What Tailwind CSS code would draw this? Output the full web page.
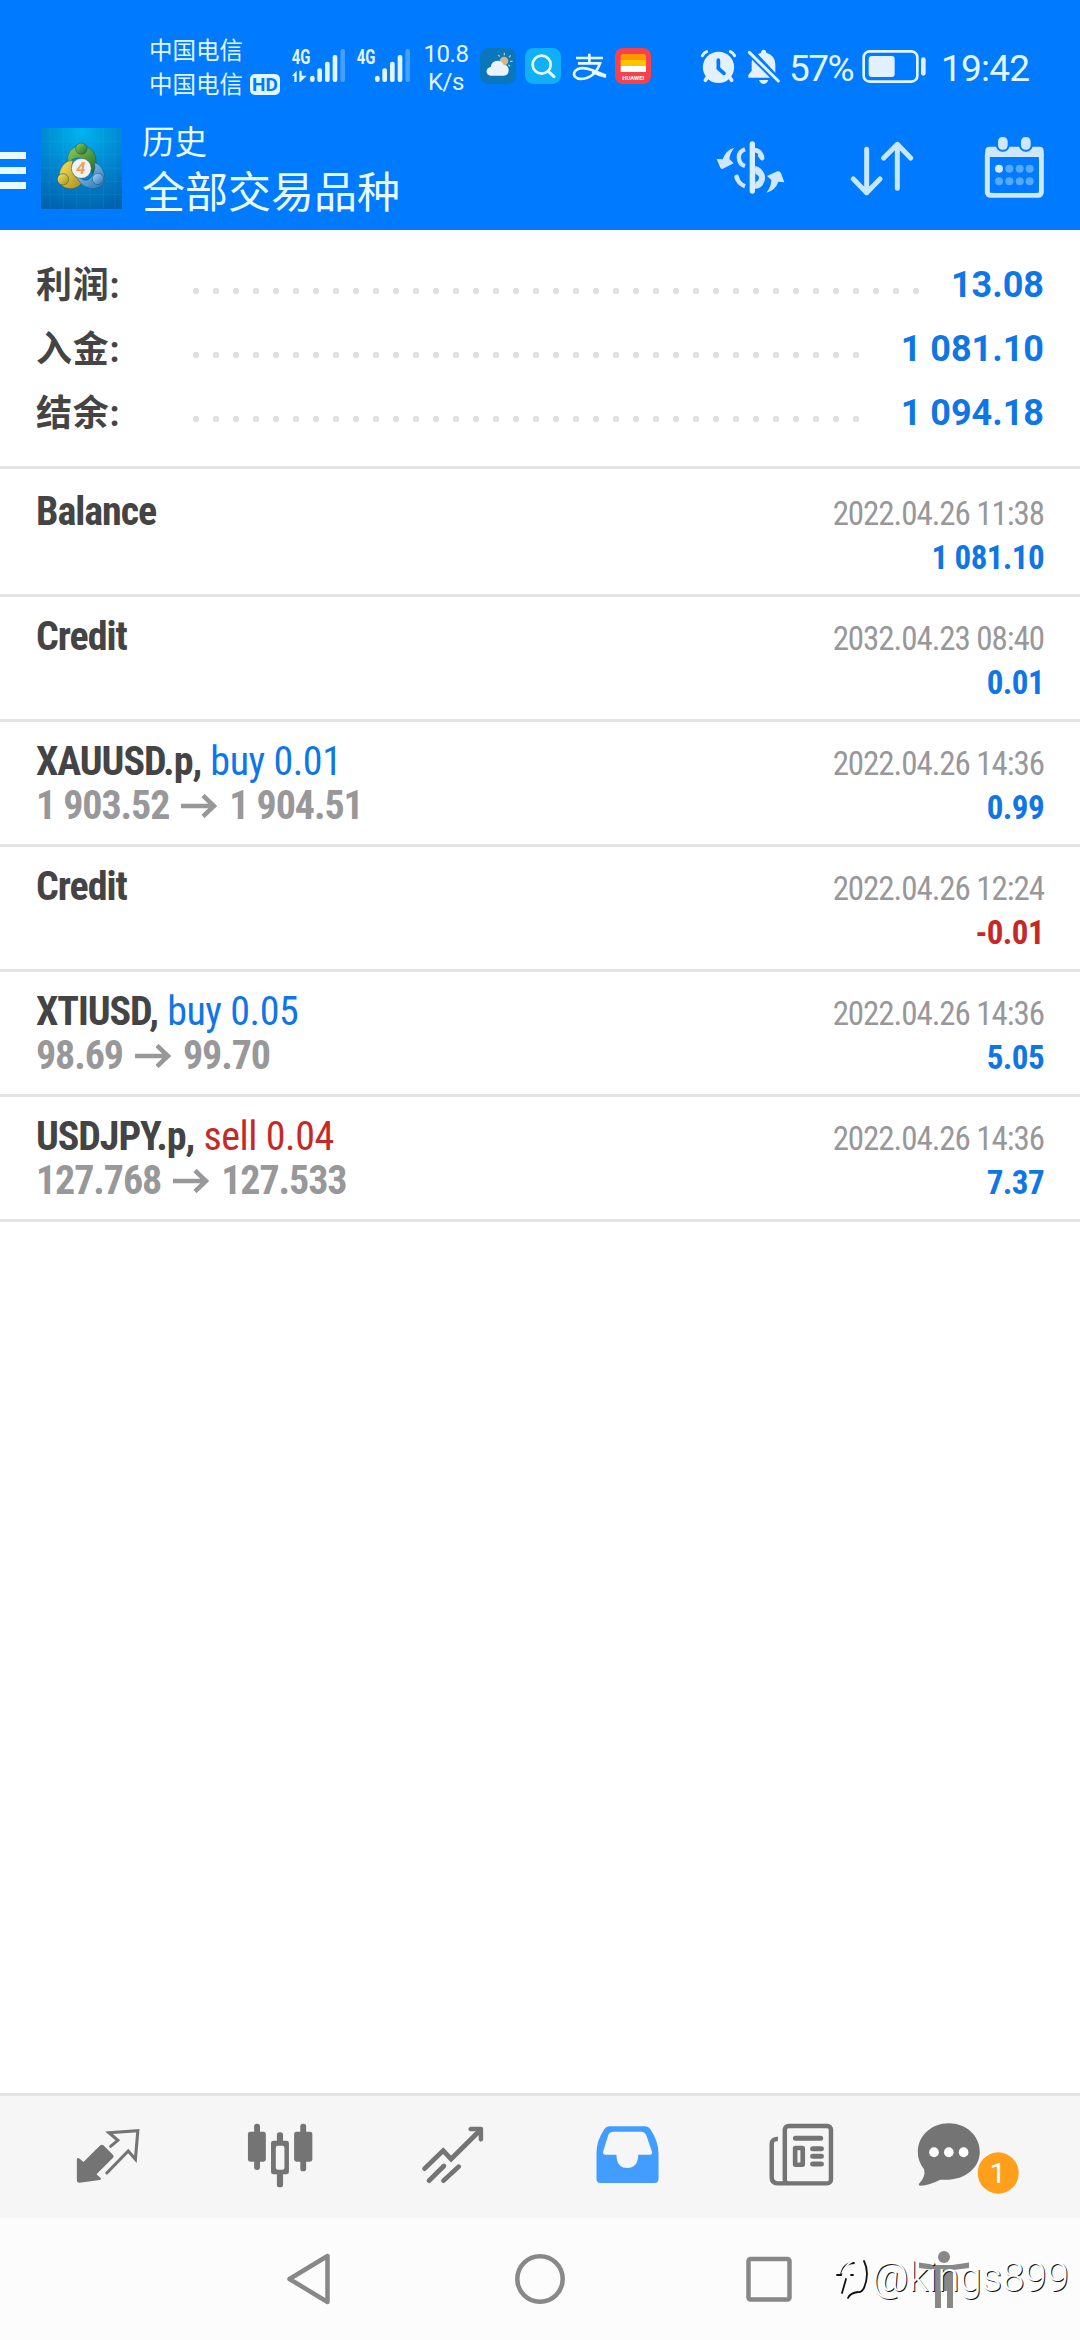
<!DOCTYPE html>
<html lang="zh-CN">
<head>
<meta charset="utf-8">
<meta name="viewport" content="width=device-width">
<title>历史</title>
<script src="https://cdn.jsdelivr.net/npm/@tailwindcss/browser@4"></script>
</head>
<body class="w-[1080px] h-[2340px] overflow-hidden bg-white font-['Roboto','Noto_Sans_CJK_SC',sans-serif] flex flex-col">

<header class="bg-[#007aff] h-[230px] shrink-0 text-[#e2f5ff]">
  <!-- status bar -->
  <div class="h-[100px] pt-8 flex items-center whitespace-nowrap">
    <div class="ml-[149px] w-[141px] text-[23.5px] leading-[34px] pt-[3px]">
      <div>中国电信</div>
      <div class="flex items-center gap-[7px]">中国电信<span class="w-[30px] h-[21px] rounded-[5px] bg-[#e2f5ff] text-[#007aff] text-[19px] leading-[21px] font-bold text-center">HD</span></div>
    </div>
    <svg class="w-[122px] h-12" viewBox="480 66 366 144">
      <g fill="#e2f5ff">
        <text x="485" y="131" font-size="60" font-weight="700" textLength="56" lengthAdjust="spacingAndGlyphs">4G</text>
        <text x="680" y="131" font-size="60" font-weight="700" textLength="56" lengthAdjust="spacingAndGlyphs">4G</text>
        <path d="M486 168L500 152V186H493V168ZM508 152H515V167H530L511 186H508Z"/>
        <g id="bars">
          <rect x="540" y="167" width="14" height="19" rx="7"/><rect x="562" y="145" width="14" height="41" rx="6"/><rect x="585" y="125" width="14" height="61" rx="6"/><rect x="608" y="105" width="14" height="81" rx="6"/><rect x="631" y="87" width="14" height="99" rx="6" opacity=".3"/>
        </g>
        <use href="#bars" x="195"/>
      </g>
    </svg>
    <div class="ml-3 w-[44px] text-[24px] leading-[28px] tracking-[-0.500px] text-center flex flex-col items-center pt-[3px]"><span>10.8</span><span>K/s</span></div>
    <svg class="ml-[11px] w-[38px] h-12" viewBox="207 66 114 144">
      <rect x="210" y="84" width="108" height="108" rx="25" fill="#0a77bd"/>
      <path d="M283 106v-8M297 112l5-6M300 124h8M269 110l-4-5M295 134l5 5" stroke="#c9c3a0" stroke-width="4"/>
      <circle cx="282" cy="123" r="13" fill="#d3b68a"/>
      <path d="M243 167a13 13 0 0 1-1-26q4-20 22-19 13 1 17 13 14-1 15 15t-15 17Z" fill="#e9f4fc"/>
    </svg>
    <svg class="ml-[7px] w-[38px] h-12" viewBox="342 66 114 144">
      <rect x="345" y="84" width="108" height="108" rx="25" fill="#0fb0f8"/>
      <circle cx="395" cy="134" r="27" fill="none" stroke="#e8faff" stroke-width="8"/>
      <path d="M415 154l17 16" stroke="#e8faff" stroke-width="9" stroke-linecap="round"/>
    </svg>
    <svg class="ml-[10px] w-9 h-12" viewBox="486 66 108 144" fill="none" stroke="#e8f8ff" stroke-width="8">
      <path d="M498 114H579M538 101V129M504 130H570Q558 164 532 173Q506 182 495 170Q486 156 504 147Q520 141 545 150T588 168"/>
      <path d="M548 150Q570 160 588 162V174Q566 170 545 158Z" fill="#e8f8ff" stroke="none"/>
    </svg>
    <svg class="ml-[6px] w-[38px] h-12" viewBox="612 66 114 144">
      <rect x="615" y="84" width="108" height="108" rx="24" fill="#f8414b"/>
      <path d="M632 110q0-8 8-8H700q8 0 8 8V122H632Z" fill="#ff9800"/><path d="M632 120H708V138H632Z" fill="#ffc400"/><path d="M632 138H708V156H632Z" fill="#fff"/>
      <text x="637" y="180" font-size="17" font-weight="700" fill="#fff" textLength="66" lengthAdjust="spacingAndGlyphs">HUAWEI</text>
    </svg>
    <svg class="ml-12 w-[37px] h-12" viewBox="60 66 111 144" fill="none" stroke="#e2f0ff" stroke-linecap="round">
      <circle cx="115.500" cy="142" r="47" fill="#e2f0ff" stroke="none"/>
      <path d="M67 107Q72 98 80 95M164 107Q159 98 151 95" stroke-width="9"/>
      <path d="M82 172L76 181M149 172L155 181" stroke-width="11"/>
      <path d="M115 120V145L132 160" stroke="#007aff" stroke-width="11"/>
    </svg>
    <svg class="ml-[10px] w-[33px] h-12" viewBox="201 66 99 144">
      <g fill="#e2f0ff"><path d="M234 103q6-4 9-5 1-9 8-9t8 9q28 9 27 37v23Z"/><path d="M216 119L270 173H205V165L215 152V128Z"/><path d="M237 180H265Q260 192 251 192T237 180Z"/></g>
      <path d="M208 97L295 183" stroke="#e2f0ff" stroke-width="9" stroke-linecap="round"/>
    </svg>
    <div class="ml-[9px] w-[73px] text-[37px] leading-none tracking-[-1.500px] pt-1">57%</div>
    <svg class="w-[65px] h-12" viewBox="547 66 195 144" fill="#e2f0ff">
      <rect x="552" y="94" width="161" height="91" rx="18" fill="none" stroke="#e2f5ff" stroke-width="8"/>
      <rect x="567" y="108" width="78" height="63" rx="9"/><rect x="724" y="112" width="14" height="55" rx="7"/>
    </svg>
    <div class="ml-[14px] text-[37px] leading-none tracking-[-0.800px] pt-1">19:42</div>
  </div>

  <!-- app bar -->
  <div class="h-[130px] flex items-center">
    <div class="w-[26px] h-[37px] mt-[11px] flex flex-col justify-between"><i class="h-[7px] bg-[#e8faff]"></i><i class="h-[7px] bg-[#e8faff]"></i><i class="h-[7px] bg-[#e8faff]"></i></div>
    <svg class="ml-[15px] mt-[7px] w-[81px] h-[81px]" viewBox="123 55 243 243">
      <defs>
        <radialGradient id="sky" cx=".5" cy=".05" r="1"><stop offset="0" stop-color="#00b4f0"/><stop offset=".5" stop-color="#0088d0"/><stop offset="1" stop-color="#0062ae"/></radialGradient>
        <linearGradient id="gr" x2="1" y2="1"><stop offset="0" stop-color="#8fd25a"/><stop offset="1" stop-color="#21682b"/></linearGradient>
        <linearGradient id="ye" x2="1" y2="1"><stop offset="0" stop-color="#f5ea62"/><stop offset="1" stop-color="#b08a14"/></linearGradient>
        <linearGradient id="bl" x2="1" y2="1"><stop offset="0" stop-color="#a8d8f6"/><stop offset="1" stop-color="#2272b8"/></linearGradient>
      </defs>
      <rect x="123" y="55" width="243" height="243" fill="url(#sky)"/>
      <path d="M123 95H366M123 135H366M123 175H366M123 215H366M123 255H366M150 55V298M190 55V298M230 55V298M270 55V298M310 55V298M345 55V298" stroke="#3fb8ee" stroke-opacity=".22" stroke-width="2"/>
      <g stroke="#17506b" stroke-opacity=".6" stroke-width="2.500">
        <path d="M203 160Q198 112 243 108Q290 112 289 160L277 192Q262 146 244 146Q226 140 203 160Z" fill="url(#gr)"/>
        <path d="M283 158Q312 168 315 208Q312 235 280 237Q240 235 219 190L240 205Q262 222 279 195Q288 175 283 158Z" fill="url(#bl)"/>
        <path d="M219 151Q180 155 176 205Q178 235 210 237Q232 237 244 222L222 196Q213 180 219 151Z" fill="url(#ye)"/>
        <circle cx="244" cy="117" r="17" fill="url(#gr)"/><circle cx="189" cy="209" r="17" fill="url(#ye)"/><circle cx="294" cy="208" r="17" fill="url(#bl)"/>
        <circle cx="244" cy="176" r="30" fill="#f1f1ee"/>
      </g>
      <text x="243" y="194" font-size="50" font-weight="700" font-style="italic" text-anchor="middle" fill="#eda05b">4</text>
    </svg>
    <div class="ml-[20px] mt-[12px] text-[#e8faff]">
      <div class="text-[32.500px] leading-[44px]">历史</div>
      <div class="text-[43px] leading-[57px]">全部交易品种</div>
    </div>
    <svg class="ml-auto w-[80px] h-[80px] mt-[6px]" viewBox="60 54 240 240" fill="none" stroke="#cfe6ff">
      <path d="M187 102V243" stroke-width="16" stroke-linecap="round" stroke="#d4efff"/>
      <path d="M165 118Q144 126 147 146Q149 163 165 168M192 120Q211 121 217 142M140 200Q144 221 165 229M195 178Q218 184 219 204Q217 226 195 229" stroke-width="13"/>
      <path d="M211 137L216 144M140 201L141 205" stroke-width="14" stroke-linecap="round"/>
      <path d="M196 168Q222 174 224 204Q222 234 196 236Z" fill="#cfe6ff" stroke="none"/><path d="M196 192Q208 196 207 204Q205 214 196 216Z" fill="#007aff" stroke="none"/>
      <path d="M133 113Q120 128 118 147L131 160L102 175Q94 180 91 173L80 147L98 148Q107 120 133 113ZM229 248Q243 232 244 210L231 198L262 184Q270 182 273 190L283 217L265 215Q257 240 229 248Z" fill="#cfe6ff" stroke="none"/>
    </svg>
    <svg class="ml-[60px] w-[64px] h-[80px] mt-[6px]" viewBox="480 54 192 240" fill="none" stroke="#c6e8ff" stroke-width="15" stroke-linecap="round" stroke-linejoin="round">
      <path d="M530 118V248M490 207L530 248L570 207M622 235V103M581 144L622 103L662 144"/>
    </svg>
    <svg class="ml-[70px] mr-[35px] w-[61px] h-[80px] mt-[6px]" viewBox="882 54 183 240">
      <rect x="892" y="126" width="162" height="130" rx="9" fill="none" stroke="#cfe6ff" stroke-width="15"/>
      <path d="M886 122q0-12 12-12H1048q13 0 13 12V141H886Z" fill="#cfe6ff"/>
      <rect x="900" y="141" width="147" height="108" rx="13" fill="#007aff"/>
      <g fill="#cfe6ff" stroke="#007aff" stroke-width="6"><rect x="921" y="78" width="35" height="44" rx="16"/><rect x="990" y="78" width="35" height="44" rx="16"/></g>
      <g fill="#55a9ff"><circle cx="927" cy="176" r="12" fill="#cfeaff"/><circle cx="958" cy="176" r="12"/><circle cx="989" cy="176" r="12"/><circle cx="1019" cy="176" r="12"/><circle cx="927" cy="214" r="12"/><circle cx="958" cy="214" r="12"/><circle cx="989" cy="214" r="12"/><circle cx="1019" cy="214" r="12"/></g>
    </svg>
  </div>
</header>

<!-- account summary -->
<section class="h-[239px] shrink-0 border-b-3 border-[#e4e4e4] pt-[23px] pl-9 pr-9 text-[36px] font-bold text-[#444]">
  <div class="h-16 flex items-center"><span class="w-[150px] pt-0.5 tracking-[0.800px]">利润:</span><span class="w-[740px] h-5 mt-[11px] bg-[radial-gradient(circle,#e0e0e0_3px,transparent_3.6px)] bg-[length:20px_20px]"></span><span class="ml-auto text-[#1076e6]">13.08</span></div>
  <div class="h-16 flex items-center"><span class="w-[150px] pt-0.5 tracking-[0.800px]">入金:</span><span class="w-[680px] h-5 mt-[11px] bg-[radial-gradient(circle,#e0e0e0_3px,transparent_3.6px)] bg-[length:20px_20px]"></span><span class="ml-auto text-[#1076e6]">1 081.10</span></div>
  <div class="h-16 flex items-center"><span class="w-[150px] pt-0.5 tracking-[0.800px]">结余:</span><span class="w-[680px] h-5 mt-[11px] bg-[radial-gradient(circle,#e0e0e0_3px,transparent_3.6px)] bg-[length:20px_20px]"></span><span class="ml-auto text-[#1076e6]">1 094.18</span></div>
</section>

<!-- deals -->
<main id="deals" class="grow pt-[3px] font-stretch-condensed"></main>

<!-- tabs -->
<nav class="h-[125px] shrink-0 border-t-3 border-[#e4e4e4] bg-[#f6f6f6] flex items-center px-5 text-[#747474]">
  <div class="w-1/6 flex justify-center"><svg class="w-18 h-18 overflow-visible" viewBox="205 121 209 216" preserveAspectRatio="none">
    <path d="M290 194q5-4 9 0L327 223q4 4 0 8L279 281L291 292Q294 297 288 298L230 306Q222 307 222 299V235Q224 229 230 234L241 244Z" fill="currentColor"/>
    <path d="M320 197L341 179L315 156L399 150L392 236L371 211L309 277" fill="none" stroke="currentColor" stroke-width="9" stroke-linecap="round"/>
  </svg></div>
  <div class="w-1/6 flex justify-center"><svg class="w-18 h-18" viewBox="708.6 121 209 216" preserveAspectRatio="none" fill="currentColor">
    <rect x="738" y="129" width="17" height="139" rx="8"/><rect x="872" y="129" width="17" height="143" rx="8"/><rect x="804" y="155" width="18" height="165" rx="8"/>
    <rect x="720" y="153" width="52" height="90" rx="7"/><rect x="854" y="153" width="53" height="90" rx="7"/><rect x="787" y="180" width="52" height="101" rx="7"/><rect x="801" y="195" width="25" height="72" rx="6" fill="#f6f6f6"/>
  </svg></div>
  <div class="w-1/6 flex justify-center"><svg class="w-18 h-18" viewBox="1212 121 209 216" preserveAspectRatio="none" fill="none" stroke="currentColor" stroke-width="14" stroke-linecap="round">
    <path d="M1234 264L1288 210L1311 235L1396 148M1247 300L1290 256M1289 300L1333 258"/><path d="M1366 138H1398Q1404 138 1404 144V178Q1397 188 1391 178V162L1384 152H1366Q1356 145 1366 138Z" fill="currentColor" stroke="none"/>
  </svg></div>
  <div class="w-1/6 flex justify-center"><svg class="w-18 h-18" viewBox="147 121 209 216" preserveAspectRatio="none">
    <path fill-rule="evenodd" fill="#429dff" d="M200 137H304Q314 137 319 145Q343 182 343 218V294Q343 307 331 307H175Q163 307 163 295V216Q163 180 186 145Q191 137 200 137ZM211 153Q202 153 198 161L182 213Q181 222 189 222H221Q221 261 252 262Q284 260 284 222H317Q326 222 324 213L308 165Q304 153 292 153Z"/>
  </svg></div>
  <div class="w-1/6 flex justify-center"><svg class="w-18 h-18" viewBox="650.6 121 209 216" preserveAspectRatio="none" fill="none" stroke="currentColor" stroke-width="13">
    <rect x="711" y="136" width="134" height="172" rx="11"/><path d="M691 175Q673 174 673 190V290Q673 308 690 308H720"/>
    <path d="M742 173H815M792 204H817M792 227H817M792 250H817" stroke-width="15" stroke-linecap="round"/><rect x="741" y="202" width="22" height="50" rx="1" stroke-width="13.500"/>
  </svg></div>
  <div class="w-1/6 flex justify-center"><svg class="w-[120px] h-18 overflow-visible" viewBox="1084 121 348.500 216" preserveAspectRatio="none">
    <path d="M1188 128C1238 128 1278 165 1278 213C1278 261 1234 303 1163 297Q1132 314 1106 315Q1097 315 1103 307Q1122 287 1116 266Q1098 242 1098 214C1098 165 1138 128 1188 128Z" fill="currentColor"/>
    <g fill="#fff"><ellipse cx="1145" cy="215" rx="14" ry="15"/><ellipse cx="1188" cy="215" rx="14" ry="15"/><ellipse cx="1231" cy="215" rx="14" ry="15"/></g>
    <ellipse cx="1331.500" cy="277" rx="59.500" ry="62" fill="#ff9f1c"/>
    <text x="1330" y="307" font-size="85" text-anchor="middle" fill="#fff">1</text>
  </svg></div>
</nav>

<!-- system navigation -->
<footer class="relative h-[122px] shrink-0 bg-[#fcfcfc] flex items-center text-[#888]">
  <svg class="ml-[279px] w-[60px] h-[60px]" viewBox="279 2249 60 60" fill="none" stroke="currentColor" stroke-width="4.500" stroke-linejoin="round"><path d="M289.500 2279L327.500 2256V2302Z"/></svg>
  <svg class="ml-[171px] w-[60px] h-[60px]" viewBox="510 2249 60 60" fill="none" stroke="currentColor" stroke-width="4.500"><circle cx="540" cy="2279" r="22.700"/></svg>
  <svg class="ml-[169px] w-[60px] h-[60px]" viewBox="739 2249 60 60" fill="none" stroke="currentColor" stroke-width="4.500"><rect x="748.500" y="2259" width="41" height="40.500" rx="2"/></svg>
  <svg class="ml-[115px] w-[60px] h-[60px]" viewBox="914 2249 60 60" fill="currentColor"><circle cx="944" cy="2257" r="6"/><path d="M919 2262.500L936 2265H952L969 2262.500V2268L953 2270V2308H947V2291H941V2308H935V2270L919 2268Z"/></svg>
  <div class="absolute left-[832px] top-[37px] flex items-center">
    <svg class="w-10 h-[46px]" viewBox="0 0 40 46" fill="none" stroke-linecap="round">
      <g stroke="#111" stroke-width="1.800"><path d="M10 38L14 24M5 20H9Q11 8 22 8M32 6Q38 18 32 33Q29 38 26 37Q18 38 16 43M19 20H21"/></g>
      <path d="M8 37L12 23M14 17H24M10 18Q13 10 21 6" stroke="#fff" stroke-width="1.500"/>
    </svg>
    <span class="text-[40px] leading-[46px] font-light text-white tracking-[0.100px] [text-shadow:1px_1px_0_#111]">@kings899</span>
  </div>
</footer>

<script>
  const rows = [
    ['Balance', '', '', '', '2022.04.26 11:38', '1 081.10'],
    ['Credit', '', '', '', '2032.04.23 08:40', '0.01'],
    ['XAUUSD.p,', 'buy 0.01', '1 903.52', '1 904.51', '2022.04.26 14:36', '0.99'],
    ['Credit', '', '', '', '2022.04.26 12:24', '-0.01'],
    ['XTIUSD,', 'buy 0.05', '98.69', '99.70', '2022.04.26 14:36', '5.05'],
    ['USDJPY.p,', 'sell 0.04', '127.768', '127.533', '2022.04.26 14:36', '7.37'],
  ];
  const arrow = '<svg class="inline-block w-9 h-6 mx-3" viewBox="0 0 36 24" fill="none" stroke="#98989a" stroke-width="4.500"><path d="M0 12H33M22 1.500L33 12L22 22.500"/></svg>';
  document.getElementById('deals').innerHTML = rows.map(([name, side, from, to, time, value]) => `
    <div class="h-[125px] border-b-3 border-[#e4e4e4] pt-[18px] px-9">
      <div class="h-11 leading-[44px] flex items-baseline justify-between text-[40px]">
        <div><b class="font-bold text-[#444] tracking-[-1.050px]">${name}</b> <span class="tracking-[-0.450px] ${side.startsWith('sell') ? 'text-[#c62828]' : 'text-[#1076e6]'}">${side}</span></div>
        <span class="text-[33px] tracking-[-1.050px] text-[#98989a]">${time}</span>
      </div>
      <div class="h-11 leading-[44px] flex items-baseline justify-between text-[40px] font-bold">
        <div class="text-[#98989a] tracking-[-1.100px] flex items-center">${from ? from + arrow + to : '&nbsp;'}</div>
        <span class="text-[33px] tracking-[-0.600px] ${value[0] === '-' ? 'text-[#c62828]' : 'text-[#1076e6]'}">${value}</span>
      </div>
    </div>`).join('');
</script>
</body>
</html>
